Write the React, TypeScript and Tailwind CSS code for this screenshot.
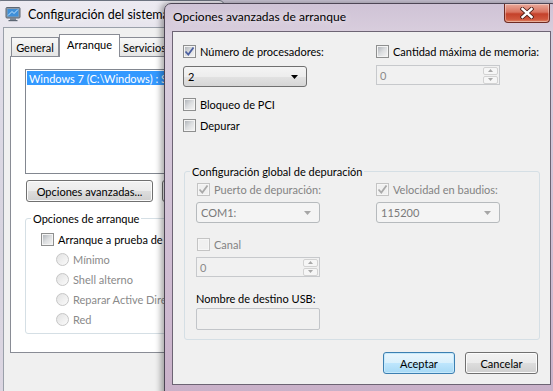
import React from "react";

const Check = ({ checked = false, disabled = false }: { checked?: boolean; disabled?: boolean }) => (
  <span
    className={`flex h-[13px] w-[13px] shrink-0 items-center justify-center border ${
      disabled ? "border-[#c4c4c4] bg-[#f6f6f6]" : "border-[#8e8f8f] bg-[#f4f4f4]"
    }`}
  >
    <span
      className={`relative flex h-[9px] w-[9px] items-center justify-center ${
        disabled
          ? "bg-[#f0f0f0]"
          : "bg-gradient-to-br from-[#b2b6bb] via-[#dcdee0] to-[#f2f2f2]"
      }`}
    >
      {checked && (
        <svg width="11" height="11" viewBox="0 0 11 11" className="absolute -left-[1px] -top-[1px]">
          <path
            d="M1.5 5.5 L4.3 8.5 L9.5 1.5"
            fill="none"
            stroke={disabled ? "#a9a9a9" : "#4b5fa0"}
            strokeWidth="1.8"
          />
        </svg>
      )}
    </span>
  </span>
);

const CheckRow = ({
  label,
  checked,
  disabled,
  className = "",
}: {
  label: string;
  checked?: boolean;
  disabled?: boolean;
  className?: string;
}) => (
  <div className={`flex h-[15px] items-center gap-[4px] ${className}`}>
    <Check checked={checked} disabled={disabled} />
    <span className={`whitespace-nowrap ${disabled ? "text-[#838383]" : "text-black"}`}>{label}</span>
  </div>
);

const Radio = ({ label }: { label: string }) => (
  <div className="flex h-[20px] items-center gap-[4px]">
    <span className="h-[13px] w-[13px] shrink-0 rounded-full border border-[#c6c6c6] bg-gradient-to-br from-[#e2e2e2] to-[#fbfbfb]" />
    <span className="whitespace-nowrap text-[#8a8a8a]">{label}</span>
  </div>
);

const Arrow = ({ color }: { color: string }) => (
  <svg width="7" height="4" viewBox="0 0 7 4" className="shrink-0">
    <path d="M0 0 H7 L3.5 4 Z" fill={color} />
  </svg>
);

const Combo = ({ value, disabled = false }: { value: string; disabled?: boolean }) => (
  <div
    className={`flex h-[21px] w-[124px] items-center justify-between rounded-[3px] border pl-[4px] pr-[8px] ${
      disabled
        ? "border-[#b6babd] bg-[#f4f4f4] text-[#7a7a7a]"
        : "border-[#707070] bg-[linear-gradient(to_bottom,#f4f4f4_0%,#ededed_50%,#e2e2e2_51%,#d6d6d6_100%)] text-black"
    }`}
  >
    <span>{value}</span>
    <Arrow color={disabled ? "#a6a6a6" : "#000"} />
  </div>
);

const Spin = ({ value }: { value: string }) => (
  <div className="flex h-[20px] w-[124px] items-center justify-between border border-[#c7c9cc] bg-[#f1f1f1] pl-[3px] pr-[1px] text-[#8a8a8a]">
    <span>{value}</span>
    <div className="flex flex-col gap-[1px]">
      <span className="flex h-[8px] w-[15px] items-center justify-center rounded-[2px] border border-[#d2d2d2] bg-[#f6f6f6]">
        <svg width="5" height="3" viewBox="0 0 5 3">
          <path d="M0 3 H5 L2.5 0 Z" fill="#a8a8a8" />
        </svg>
      </span>
      <span className="flex h-[8px] w-[15px] items-center justify-center rounded-[2px] border border-[#d2d2d2] bg-[#f6f6f6]">
        <svg width="5" height="3" viewBox="0 0 5 3">
          <path d="M0 0 H5 L2.5 3 Z" fill="#a8a8a8" />
        </svg>
      </span>
    </div>
  </div>
);

const Button = ({ label, primary = false, className = "" }: { label: string; primary?: boolean; className?: string }) => (
  <div
    className={`flex h-[22px] items-center justify-center whitespace-nowrap rounded-[3px] border text-black ${
      primary
        ? "border-[#3c7fb1] bg-[linear-gradient(to_bottom,#eaf6fd_0%,#d9f0fc_50%,#bee6fd_51%,#a7d9f5_100%)] shadow-[inset_0_0_0_1px_#c6e9fb]"
        : "border-[#707070] bg-[linear-gradient(to_bottom,#f2f2f2_0%,#ebebeb_50%,#dddddd_51%,#cfcfcf_100%)] shadow-[inset_0_0_0_1px_#fbfbfb]"
    } ${className}`}
  >
    {label}
  </div>
);

const SysIcon = () => (
  <svg width="16" height="16" viewBox="0 0 16 16" className="shrink-0">
    <rect x="1" y="1.5" width="14" height="10.5" rx="1" fill="#8d9aa8" stroke="#5c6673" strokeWidth="1" />
    <rect x="2.5" y="3" width="11" height="7.5" fill="#3f8fd8" />
    <path d="M3 9.5 L7 5.5 L9 7.5 L13 3.5" fill="none" stroke="#bfe3ff" strokeWidth="1" />
    <rect x="5" y="12" width="6" height="2" fill="#7d8894" />
    <rect x="3.5" y="14" width="9" height="1.2" fill="#5c6673" />
  </svg>
);

function BackgroundWindow() {
  return (
    <div className="absolute left-[-5px] top-0 flex h-[400px] w-[230px] flex-col rounded-t-[6px] border border-[#6d7380] bg-[linear-gradient(to_bottom,#eceaf1_0%,#dedbe6_20%,#d7d3df_60%,#dcd6e2_100%)]">
      <div className="flex h-[26px] shrink-0 items-center gap-[7px] pl-[9px] text-[12.5px] text-black [text-shadow:0_0_8px_rgba(255,255,255,0.95)]">
        <SysIcon />
        <span className="whitespace-nowrap">Configuración del sistema</span>
      </div>
      <div className="ml-[7px] flex flex-1 flex-col border border-[#9aa0aa] bg-[#f0f0f0]">
        <div className="flex h-[28px] items-end pl-[7px]">
          <div className="flex h-[19px] w-[48px] items-center justify-center border border-b-0 border-[#898c95] bg-gradient-to-b from-[#f8f8f8] to-[#e5e5e5]">
            General
          </div>
          <div className="relative z-10 -mb-px flex h-[23px] w-[61px] items-start justify-center border border-b-0 border-[#898c95] bg-white pt-[2px]">
            Arranque
          </div>
          <div className="flex h-[19px] w-[60px] items-center justify-start border border-b-0 border-l-0 border-[#898c95] bg-gradient-to-b from-[#f8f8f8] to-[#e5e5e5] pl-[3px]">
            Servicios
          </div>
        </div>
        <div className="ml-[6px] flex h-[297px] flex-col border border-[#898c95] bg-white pl-[14px] pt-[12px]">
          <div className="h-[105px] border border-[#828790] bg-white p-px">
            <div className="flex h-[14px] items-center whitespace-nowrap bg-[#3399ff] pl-[2px] text-white">
              Windows 7 (C:\Windows) : Sistema operativo actual
            </div>
          </div>
          <div className="mt-[6px] flex gap-[9px] pl-px">
            <Button label="Opciones avanzadas..." className="w-[127px] shrink-0" />
            <Button label="Establecer" className="w-[80px] shrink-0" />
          </div>
          <fieldset className="mt-[9px] rounded-[3px] border border-[#d5dfe5] pb-[4px] pl-[15px]">
            <legend className="ml-[-10px] px-[2px] leading-[15px]">Opciones de arranque</legend>
            <CheckRow label="Arranque a prueba de errores" className="mt-[6px]" />
            <div className="mt-[2px] pl-[15px]">
              <Radio label="Mínimo" />
              <Radio label="Shell alterno" />
              <Radio label="Reparar Active Directory" />
              <Radio label="Red" />
            </div>
          </fieldset>
        </div>
      </div>
    </div>
  );
}

function CloseButton() {
  return (
    <div className="flex h-[19px] w-[46px] items-center justify-center rounded-b-[4px] border border-t-0 border-[#6e2a22] bg-[linear-gradient(to_bottom,#e9a99b_0%,#d9735f_45%,#c4412a_55%,#d0573d_85%,#e08a6a_100%)] shadow-[inset_0_0_0_1px_rgba(255,255,255,0.35)]">
      <svg width="14" height="12" viewBox="0 0 14 12">
        <path d="M2.5 2 L11.5 10 M11.5 2 L2.5 10" stroke="#4a1c15" strokeWidth="4.2" strokeLinecap="square" />
        <path d="M2.5 2 L11.5 10 M11.5 2 L2.5 10" stroke="#ffffff" strokeWidth="2.4" strokeLinecap="square" />
      </svg>
    </div>
  );
}

function AdvancedDialog() {
  return (
    <div className="absolute left-[164px] top-[3px] flex h-[400px] w-[395px] flex-col rounded-t-[7px] border border-[#4d4655] bg-[linear-gradient(to_bottom,#cfc3d6_0%,#dacfde_8%,#d5c8da_30%,#cdb8cf_80%,#c9b0c8_100%)] shadow-[-3px_0_6px_rgba(0,0,0,0.35)]">
      <div className="flex h-[27px] shrink-0 items-start justify-between pl-[8px]">
        <span className="mt-[5px] whitespace-nowrap text-[12px] leading-[16px] text-black [text-shadow:0_0_8px_rgba(255,255,255,0.95)]">
          Opciones avanzadas de arranque
        </span>
        <div className="mr-[8px]">
          <CloseButton />
        </div>
      </div>
      <div className="mx-[7px] flex h-[354px] flex-col border border-[#6d6474] bg-[#f0f0f0] pl-[10px] pr-[10px] pt-[12px]">
        <div className="flex">
          <div className="flex w-[193px] shrink-0 flex-col">
            <CheckRow label="Número de procesadores:" checked />
            <div className="mt-[7px]">
              <Combo value="2" />
            </div>
            <CheckRow label="Bloqueo de PCI" className="mt-[10px]" />
            <CheckRow label="Depurar" className="mt-[6px]" />
          </div>
          <div className="flex shrink-0 flex-col">
            <CheckRow label="Cantidad máxima de memoria:" />
            <div className="mt-[6px]">
              <Spin value="0" />
            </div>
          </div>
        </div>
        <fieldset className="ml-px mt-[31px] rounded-[3px] border border-[#d5dfe5] pb-[9px] pl-[11px]">
          <legend className="ml-[-6px] px-[2px] leading-[15px]">Configuración global de depuración</legend>
          <div className="mt-[3px] flex">
            <div className="flex w-[180px] shrink-0 flex-col">
              <CheckRow label="Puerto de depuración:" checked disabled className="pl-px" />
              <div className="mt-[5px]">
                <Combo value="COM1:" disabled />
              </div>
              <CheckRow label="Canal" disabled className="mt-[14px] pl-px" />
              <div className="mt-[5px]">
                <Spin value="0" />
              </div>
            </div>
            <div className="flex shrink-0 flex-col">
              <CheckRow label="Velocidad en baudios:" checked disabled />
              <div className="mt-[5px]">
                <Combo value="115200" disabled />
              </div>
            </div>
          </div>
          <div className="mt-[14px] flex h-[15px] items-center">Nombre de destino USB:</div>
          <div className="mt-[2px] h-[22px] w-[124px] rounded-[2px] border border-[#c2c5c9] bg-[#f0f0f0]" />
        </fieldset>
        <div className="mt-[12px] flex justify-end gap-[10px] pr-[2px]">
          <Button label="Aceptar" primary className="w-[72px]" />
          <Button label="Cancelar" className="w-[73px]" />
        </div>
      </div>
    </div>
  );
}

export default function App() {
  return (
    <div className="relative h-[391px] w-[553px] overflow-hidden bg-[#c9c4d4] font-['Lato',Arial,sans-serif] text-[11px] leading-[15px] text-black">
      <BackgroundWindow />
      <AdvancedDialog />
    </div>
  );
}
